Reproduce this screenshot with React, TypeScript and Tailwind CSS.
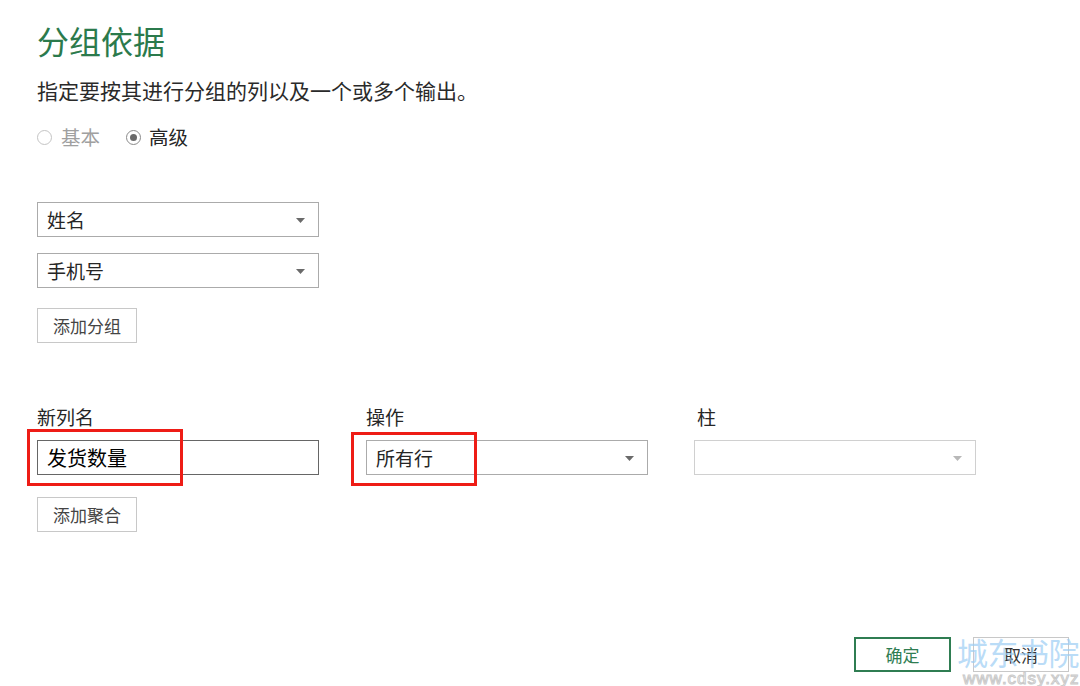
import React, { useState } from 'react';

const font = { fontFamily: '"Noto Sans CJK SC", "Noto Sans", sans-serif' };

// 下拉框
const Dropdown: React.FC<{ value: string; disabled?: boolean }> = ({ value, disabled }) => (
  <div
    className={`relative flex items-center h-[35px] w-[282px] bg-white border ${
      disabled ? 'border-[#d0d0d0]' : 'border-[#ababab]'
    }`}
  >
    <span className="pl-[9px] text-[19px] leading-none text-[#262626]">{value}</span>
    <svg
      className="absolute right-[13px] top-[15px]"
      width="9"
      height="5"
      viewBox="0 0 9 5"
    >
      <path d="M0 0 L9 0 L4.5 5 Z" fill={disabled ? '#b8b8b8' : '#6a6a6a'} />
    </svg>
  </div>
);

const SmallButton: React.FC<{ label: string }> = ({ label }) => (
  <button className="h-[35px] w-[100px] border border-[#c8c8c8] bg-white text-[17px] text-[#444] leading-none">
    {label}
  </button>
);

const App: React.FC = () => {
  const [mode, setMode] = useState('advanced');

  return (
    <div className="relative w-[1080px] h-[686px] overflow-hidden bg-white text-[#262626]" style={font}>
      <div className="pl-[37px] pt-[24px] flex flex-col">
        <h1 className="text-[32px] leading-[32px] h-[32px] text-[#2b7a4c] font-normal">分组依据</h1>
        <p className="mt-[23px] text-[21px] leading-[22px] h-[22px] text-[#2a2a2a]">
          指定要按其进行分组的列以及一个或多个输出。
        </p>

        {/* 单选 */}
        <div className="mt-[26px] flex items-center h-[20px] text-[19.5px] leading-none">
          <button className="flex items-center" onClick={() => setMode('basic')}>
            <span className="w-[15px] h-[15px] rounded-full border border-[#c4c4c4] flex items-center justify-center">
              {mode === 'basic' && <span className="w-[7px] h-[7px] rounded-full bg-[#666]" />}
            </span>
            <span className="ml-[9px] text-[#a0a0a0]">基本</span>
          </button>
          <button className="flex items-center ml-[26px]" onClick={() => setMode('advanced')}>
            <span className="w-[15px] h-[15px] rounded-full border border-[#8a8a8a] flex items-center justify-center">
              {mode === 'advanced' && <span className="w-[7px] h-[7px] rounded-full bg-[#6a6a6a]" />}
            </span>
            <span className="ml-[8px] text-[#262626]">高级</span>
          </button>
        </div>

        {/* 分组列 */}
        <div className="mt-[55px] flex flex-col gap-[16px]">
          <Dropdown value="姓名" />
          <Dropdown value="手机号" />
        </div>
        <div className="mt-[20px]">
          <SmallButton label="添加分组" />
        </div>

        {/* 聚合 */}
        <div className="mt-[63px] grid grid-cols-[282px_282px_282px] gap-x-[47px]">
          <div className="h-[22px] text-[19px] leading-[22px]">新列名</div>
          <div className="h-[22px] text-[19px] leading-[22px]">操作</div>
          <div className="h-[22px] text-[19px] leading-[22px] pl-[2px]">柱</div>
        </div>
        <div className="mt-[12px] flex">
          <div className="relative">
            <input
              className="h-[35px] w-[282px] border border-[#666] pl-[9px] text-[20px] font-normal text-black outline-none"
              style={font}
              defaultValue="发货数量"
            />
            <div className="absolute left-[-10px] top-[-11px] w-[156px] h-[57px] border-[3px] border-[#ee1c16] pointer-events-none" />
          </div>
          <div className="relative ml-[47px]">
            <Dropdown value="所有行" />
            <div className="absolute left-[-15px] top-[-8px] w-[126px] h-[54px] border-[3px] border-[#ee1c16] pointer-events-none" />
          </div>
          <div className="ml-[46px]">
            <Dropdown value="" disabled />
          </div>
        </div>
        <div className="mt-[22px]">
          <SmallButton label="添加聚合" />
        </div>
      </div>

      {/* 底部按钮 */}
      <div className="absolute left-0 right-0 top-[637px] flex justify-end pr-[11px] gap-[22px]">
        <button className="h-[35px] w-[97px] border-2 border-[#2f7d52] text-[17px] text-[#2f7d52] leading-none">
          确定
        </button>
        <button className="h-[35px] w-[96px] border border-[#c8c8c8] text-[17px] text-[#333] leading-none">
          取消
        </button>
      </div>

      {/* 水印 */}
      <div className="absolute left-[957px] top-[633px] flex flex-col items-start pointer-events-none whitespace-nowrap">
        <span className="text-[31px] leading-[38px] tracking-[-0.5px] text-[#9ccdf4]/70">城东书院</span>
        <span className="text-[17px] leading-[16px] text-white tracking-[1px] [-webkit-text-stroke:1px_#c9c9c9] ml-[6px]" style={{ fontFamily: '"Liberation Sans", sans-serif' }}>
          www.cdsy.xyz
        </span>
      </div>
    </div>
  );
};

export default App;
